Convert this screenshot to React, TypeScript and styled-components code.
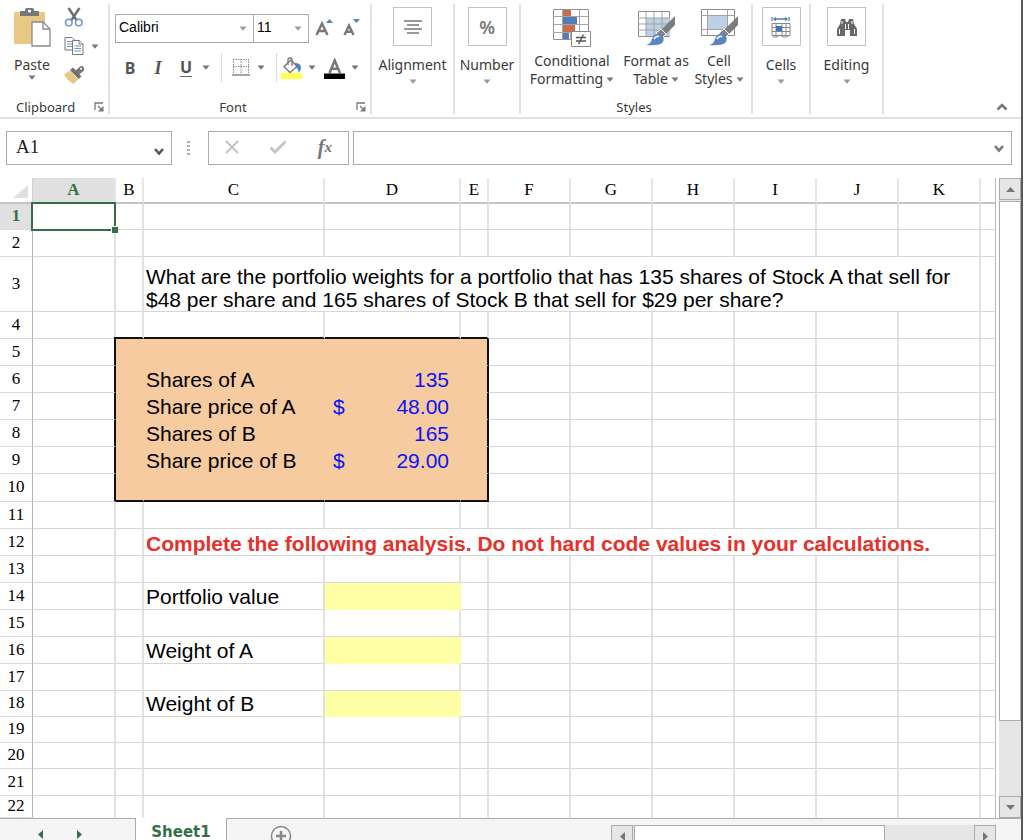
import React from "react";
import styled, { createGlobalStyle, css } from "styled-components";

const GlobalStyle = createGlobalStyle`
  *, *::before, *::after { box-sizing: border-box; }
  body { margin: 0; background: #fff; overflow: hidden; }
  button, select, input { font: inherit; color: inherit; margin: 0; }
`;

const ui = `"Noto Sans", "Open Sans", sans-serif`;
const sans = `"Liberation Sans", Arial, sans-serif`;
const serif = `"Liberation Serif", "Times New Roman", serif`;

const Shell = styled.div`
  display: flex;
  flex-direction: column;
  height: 100vh;
  overflow: hidden;
  margin-right: 1px;
  border-right: 2px solid #58595b;
  background: #fff;
`;

/* Ribbon */
const Ribbon = styled.header`
  display: flex;
  flex: none;
  height: 119px;
  padding-top: 4px;
  border-bottom: 2px solid #e1e1e1;
  font-family: ${ui};
  color: #3a3a3a;
`;

const Group = styled.section<{ $w: number }>`
  display: flex;
  flex-direction: column;
  flex: none;
  width: ${(p) => p.$w}px;
  height: 110px;
  border-right: 2px solid #e2e2e2;
`;

const GroupBody = styled.div`
  display: flex;
  flex: 1;
`;

const GroupFooter = styled.div<{ $left?: number }>`
  display: flex;
  align-items: center;
  height: 14px;
  padding: 0 4px 0 ${(p) => p.$left ?? 0}px;
  font-size: 13px;
  line-height: 14px;
`;

const GroupLabel = styled.span<{ $center?: boolean }>`
  flex: ${(p) => (p.$center ? 1 : "none")};
  text-align: center;
`;

const PlainButton = styled.button`
  display: inline-flex;
  align-items: center;
  padding: 0;
  border: 0;
  background: none;
  svg { display: block; flex: none; }
`;

const Launcher = styled(PlainButton)`
  margin-left: auto;
`;

const LargeButton = styled(PlainButton)<{ $w: number }>`
  flex-direction: column;
  justify-content: flex-start;
  flex: none;
  width: ${(p) => p.$w}px;
  padding-top: 3px;
  font-size: 14px;
  line-height: 18px;
  white-space: nowrap;
`;

const Tile = styled.span`
  display: grid;
  place-items: center;
  width: 39px;
  height: 39px;
  margin-bottom: 10px;
  border: 1px solid #c2c2c2;
`;

const Percent = styled.span`
  font-size: 18px;
  font-weight: 600;
  color: #777;
`;

const Picture = styled.span<{ $gap: number }>`
  display: block;
  height: 41px;
  margin-bottom: ${(p) => p.$gap}px;
`;

const CaretGap = styled.span<{ $gap?: number }>`
  display: block;
  margin-top: ${(p) => p.$gap ?? 5}px;
`;

const LabelLine = styled.span`
  display: flex;
  align-items: center;
  gap: 3px;
`;

const ToolColumn = styled.div`
  display: flex;
  flex-direction: column;
  gap: 9px;
  padding-top: 3px;
`;

const SmallTool = styled(PlainButton)`
  gap: 7px;
  height: 20px;
`;

const FontBody = styled.div`
  flex: 1;
  padding: 9px 0 0 5px;
`;

const FontRow = styled.div`
  display: flex;
  align-items: center;
  height: 30px;
`;

const FormatRow = styled(FontRow)`
  height: 29px;
  margin-top: 10px;
`;

const PickBox = styled.label<{ $w: number }>`
  display: grid;
  grid-template-columns: 1fr 14px;
  align-items: center;
  width: ${(p) => p.$w}px;
  height: 29px;
  margin-right: -1px;
  border: 1px solid #ababab;
  font-family: ${sans};
  font-size: 14px;
  color: #000;
  select {
    grid-area: 1 / 1 / 2 / 3;
    width: 100%;
    height: 27px;
    padding: 0 0 2px 3px;
    border: 0;
    background: none;
    appearance: none;
  }
  svg { grid-area: 1 / 2; pointer-events: none; }
`;

const FormatButton = styled(PlainButton)<{ $w: number }>`
  justify-content: space-between;
  width: ${(p) => p.$w}px;
  height: 24px;
`;

const SizeButton = styled(FormatButton)`
  justify-content: flex-end;
`;

const LastFormat = styled(FormatButton)`
  margin-left: 8px;
`;

const FormatSet = styled.div`
  display: flex;
  gap: 16px;
  padding-left: 9px;
`;

const Glyph = styled.span<{ $italic?: boolean; $under?: boolean }>`
  width: 12px;
  font-family: ${(p) => (p.$italic ? serif : ui)};
  font-size: ${(p) => (p.$italic ? 18 : 16)}px;
  font-weight: 700;
  line-height: 18px;
  color: #555;
  text-align: center;
  ${(p) => p.$italic && css`font-style: italic;`}
  ${(p) => p.$under && css`border-bottom: 1px solid #666;`}
`;

const Rule = styled.span<{ $before: number; $after: number }>`
  width: 1px;
  height: 29px;
  margin: 0 ${(p) => p.$after}px 0 ${(p) => p.$before}px;
  background: #dadada;
`;

const CollapseButton = styled(PlainButton)`
  align-self: flex-end;
  margin: 0 13px 6px auto;
`;

/* Formula bar */
const FormulaBar = styled.div`
  display: flex;
  flex: none;
  align-items: center;
  padding: 12px 9px 13px 6px;
  font-family: ${serif};
`;

const NameBox = styled.label`
  display: flex;
  align-items: center;
  width: 166px;
  height: 34px;
  padding: 0 6px 0 0;
  border: 1px solid #ababab;
  input {
    flex: 1;
    min-width: 0;
    padding: 0 0 2px 9px;
    border: 0;
    background: none;
    font-size: 19px;
    color: #222;
  }
  svg { margin-top: 6px; }
`;

const FormulaField = styled(NameBox)`
  flex: 1;
  width: auto;
  svg { margin-top: 0; }
`;

const Dots = styled.svg`
  margin: 0 17px 0 15px;
`;

const EntryButtons = styled.div`
  display: flex;
  align-items: center;
  justify-content: space-between;
  width: 141px;
  height: 34px;
  margin-right: 4px;
  padding: 0 16px 2px 16px;
  border: 1px solid #ababab;
`;

const FxButton = styled(PlainButton)`
  font-size: 20px;
  font-style: italic;
  font-weight: 700;
  line-height: 20px;
  color: #777;
  sub { font-size: 15px; line-height: 10px; vertical-align: baseline; }
`;

/* Sheet */
const SheetArea = styled.main`
  display: flex;
  flex: none;
`;

const GridFrame = styled.div`
  flex: 1;
  min-width: 0;
  padding-right: 3px;
`;

const Grid = styled.table`
  width: 100%;
  table-layout: fixed;
  border-collapse: separate;
  border-spacing: 0;
  border-right: 1px solid #b8b8b8;
  font-family: ${serif};
  font-size: 17px;
  line-height: 20px;
`;

const HeadCol = styled.col`
  width: 33px;
`;

const SizedCol = styled.col<{ $w: number }>`
  width: ${(p) => p.$w}px;
`;

const Corner = styled.td`
  padding: 0 4px 4px 0;
  height: 26px;
  border-bottom: 2px solid #c4c4c4;
  border-right: 1px solid #d0d0d0;
  vertical-align: bottom;
  svg { display: block; margin-left: auto; }
`;

const ColHead = styled.th<{ $active?: boolean }>`
  height: 26px;
  padding: 0;
  border-bottom: 2px solid #c4c4c4;
  border-right: 2px solid #e6e6e6;
  background: ${(p) => (p.$active ? "#e0e0e0" : "#fff")};
  color: ${(p) => (p.$active ? "#337048" : "#000")};
  font-weight: ${(p) => (p.$active ? 700 : 400)};
  &:last-child { border-right: 0; }
`;

const RowHead = styled.th<{ $active?: boolean }>`
  padding: 0 0 1px;
  border-bottom: 1px solid #dcdcdc;
  border-right: 1px solid #b4b4b4;
  background: ${(p) => (p.$active ? "#e0e0e0" : "#fff")};
  color: ${(p) => (p.$active ? "#337048" : "#000")};
  font-weight: ${(p) => (p.$active ? 700 : 400)};
`;

type Edge = "line" | "box" | "none";
const edge = (kind: Edge, blank: string, line: string) =>
  kind === "line" ? line : kind === "box" ? "2px solid #111" : `1px solid ${blank}`;

const Cell = styled.td<{ $fill: string; $right: Edge; $bottom: Edge }>`
  padding: 0 0 0 2px;
  background: ${(p) => p.$fill};
  border-right: ${(p) => edge(p.$right, p.$fill, "2px solid #e2e2e2")};
  border-bottom: ${(p) => edge(p.$bottom, p.$fill, "1px solid #d6d6d6")};
  font-family: ${sans};
  font-size: 21px;
  line-height: 23px;
  color: #000;
  white-space: nowrap;
`;

const ActiveCell = styled(Cell)`
  position: relative;
  &::before {
    content: "";
    position: absolute;
    inset: -2px;
    border: 2px solid #337048;
  }
  &::after {
    content: "";
    position: absolute;
    right: -4px;
    bottom: -4px;
    width: 7px;
    height: 7px;
    border: solid #fff;
    border-width: 1px 0 0 1px;
    background: #337048;
  }
`;

/* Joins the top and left edges of the input box. */
const BoxCornerCell = styled(Cell)`
  position: relative;
  &::before {
    content: "";
    position: absolute;
    top: -2px;
    left: -2px;
    width: 2px;
    height: 2px;
    background: #111;
  }
`;

const Question = styled.p`
  margin: 0;
  padding-top: 8px;
`;

const Notice = styled.strong`
  display: block;
  padding-top: 3px;
  color: #e8302a;
`;

const RowLabel = styled.span`
  display: block;
`;

const Amount = styled.span`
  display: flex;
  justify-content: space-between;
  padding: 0 11px 0 6px;
  color: #0a14f5;
`;

/* Scroll bars */
const VScroll = styled.div`
  display: flex;
  flex-direction: column;
  flex: none;
  width: 22px;
  background: #e6e6e6;
`;

const ScrollButton = styled(PlainButton)`
  flex: none;
  justify-content: center;
  width: 22px;
  height: 22px;
  border: 1px solid #ababab;
  background: #e6e6e6;
`;

const Thumb = styled.div<{ $grow: number; $wide?: boolean }>`
  flex: ${(p) => p.$grow};
  border: 1px solid #ababab;
  background: #fff;
  margin: ${(p) => (p.$wide ? "0 0 0 1px" : "1px 0 0")};
`;

const Track = styled.div<{ $grow: number }>`
  flex: ${(p) => p.$grow};
`;

const TabBar = styled.footer`
  display: flex;
  flex: none;
  height: 34px;
  background: #f5f5f5;
`;

const TabNav = styled.div`
  display: flex;
  align-items: center;
  width: 136px;
  padding: 0 0 2px 35px;
  gap: 28px;
  border-top: 1px solid #ababab;
  border-right: 1px solid #ababab;
`;

const Tab = styled.button`
  display: flex;
  justify-content: center;
  width: 90px;
  padding: 2px 0 0;
  border: 0;
  background: #fff;
  font-family: "DejaVu Sans", sans-serif;
  font-size: 15px;
  font-weight: 700;
  line-height: 24px;
  color: #337048;
`;

const TabRest = styled.div`
  display: flex;
  flex: 1;
  justify-content: space-between;
  padding: 6px 25px 0 43px;
  border-top: 1px solid #ababab;
  border-left: 1px solid #ababab;
`;

const AddSheet = styled(PlainButton)`
  height: 22px;
`;

const HScroll = styled.div`
  display: flex;
  width: 385px;
  height: 22px;
  background: #e6e6e6;
`;

const Caret = ({ pale }: { pale?: boolean }) => (
  <svg width="8" height="5" viewBox="0 0 8 5" aria-hidden="true">
    <path d="M0.5 0.5h7L4 4.7z" fill={pale ? "#9a9a9a" : "#777"} />
  </svg>
);

const Chevron = ({ up, dark }: { up?: boolean; dark?: boolean }) => (
  <svg width="12" height="9" viewBox="0 0 12 9" aria-hidden="true">
    <path d={up ? "M1.5 7.5L6 3l4.5 4.5" : "M2 2l4 4.5L10 2"} fill="none" stroke={dark ? "#555" : "#777"} strokeWidth="2.6" />
  </svg>
);

const LaunchIcon = () => (
  <svg width="10" height="10" viewBox="0 0 10 10" fill="none" stroke="#777" aria-hidden="true">
    <path d="M1 8V1h8M4 4l4 4" strokeWidth="1.3" />
    <path d="M9.500 4v5.500H4z" fill="#777" stroke="none" />
  </svg>
);

const PasteIcon = () => (
  <svg width="38" height="41" viewBox="0 0 38 41" aria-hidden="true">
    <rect x="1" y="5" width="31" height="32" rx="1" fill="#e8c882" />
    <path d="M7 9V4h5V2.500Q12 1 14 1h5q2 0 2 1.500V4h5v5z" fill="#777" />
    <circle cx="16.500" cy="4" r="1.600" fill="#fff" />
    <path d="M19 15h11l7 7v17H19z" fill="#fff" stroke="#8a8a8a" strokeWidth="1.3" />
    <path d="M30 15v7h7" fill="none" stroke="#8a8a8a" strokeWidth="1.3" />
  </svg>
);

const CutIcon = () => (
  <svg width="20" height="20" viewBox="0 0 20 20" fill="none" aria-hidden="true">
    <path d="M4.500 1l8 12M15.500 1L7.500 13" stroke="#6c6c6c" strokeWidth="2.4" />
    <circle cx="4.800" cy="15.500" r="3.300" stroke="#6b93c7" strokeWidth="1.5" />
    <circle cx="14.800" cy="15.500" r="3.300" stroke="#6b93c7" strokeWidth="1.5" />
  </svg>
);

const CopyIcon = () => (
  <svg width="20" height="20" viewBox="0 0 20 20" fill="#fff" aria-hidden="true">
    <path d="M1 1.500h7l3 3V14H1z" stroke="#777" />
    <path d="M3 5.500h5M3 8h5M3 10.500h5" stroke="#6b93c7" />
    <path d="M8.500 4.500h7l3.500 3.500v10.500H8.500z" stroke="#777" />
    <path d="M15 4.500V8h4" stroke="#777" />
    <path d="M10.500 10h6.500M10.500 12.500h6.500M10.500 15h6.500" stroke="#6b93c7" />
  </svg>
);

const PainterIcon = () => (
  <svg width="20" height="20" viewBox="0 0 20 20" aria-hidden="true">
    <path d="M0 9.500l6-4 8 9-4.500 4.500Q3 15.500 0 9.500z" fill="#e8c882" />
    <path d="M6 5l3-2.500 8.500 9L14.500 14z" fill="#6f6f6f" />
    <path d="M11 6l4.500-4q2.500-2 4 0t0 4L14.500 10z" fill="#777" />
    <circle cx="17" cy="3.800" r="1" fill="#fff" />
  </svg>
);

const GrowFont = ({ down }: { down?: boolean }) => (
  <svg width="18" height="22" viewBox="0 0 18 22" aria-hidden="true">
    <path
      d={down ? "M1.500 18L6 8.500 10.500 18M3.200 14.800h5.600" : "M1.500 18L7 6.500 12.500 18M3.800 14h6.400"}
      fill="none" stroke="#777" strokeWidth="2.4"
    />
    <path d={down ? "M10 2h7l-3.500 4z" : "M11 6h7l-3.500-4z"} fill="#4f80bd" />
  </svg>
);

const BorderIcon = () => (
  <svg width="18" height="19" viewBox="0 0 18 19" fill="none" stroke="#888" aria-hidden="true">
    <path d="M1.500 1v14M9 1v14M16.500 1v14M1 1.500h16M1 8.500h16" strokeDasharray="1.5 1" />
    <path d="M0 17h18" strokeWidth="1.5" />
  </svg>
);

const FillIcon = () => (
  <svg width="21" height="22" viewBox="0 0 21 22" fill="none" aria-hidden="true">
    <path d="M3 9.500L10 3l6 6.500-7 6z" fill="#fff" stroke="#777" strokeWidth="1.3" />
    <path d="M7 8V2.500Q7 1 9 1t2 1.500V9" stroke="#777" strokeWidth="1.3" />
    <path d="M14 6q6 0 6 5 0 2-2.500 5 0-4-2.500-6z" fill="#4f80bd" />
    <path d="M0 16h21v6H0z" fill="#ffff4d" />
  </svg>
);

const FontColorIcon = () => (
  <svg width="21" height="22" viewBox="0 0 21 22" aria-hidden="true">
    <path d="M5.500 16L10.700 3.500 16 16M7.500 11.800h6.500" fill="none" stroke="#777" strokeWidth="2.5" />
    <path d="M0 16.500h21v5.500H0z" fill="#000" />
  </svg>
);

const AlignIcon = () => (
  <svg width="20" height="16" viewBox="0 0 20 16" stroke="#777" strokeWidth="1.4" aria-hidden="true">
    <path d="M1 2h18M4 6h12M1 10h18M4 14h12" />
  </svg>
);

const ConditionalIcon = () => (
  <svg width="40" height="41" viewBox="0 0 40 41" fill="none" aria-hidden="true">
    <path d="M1.500 2.500h35v30h-35z" fill="#fff" stroke="#909090" />
    <path d="M10.500 2v31M18.500 2v31M27.500 2v31M1 9.500h35M1 17.500h35M1 25.500h35" stroke="#a5a5a5" />
    <path d="M11 3h8v6h-8zM11 18h12v7H11z" fill="#cc6a4c" />
    <path d="M11 10h14v7H11zM11 26h6v6h-6z" fill="#4f7fba" />
    <path d="M19.500 24.500h19v15h-19z" fill="#fff" stroke="#8a8a8a" />
    <path d="M24 30.500h10M24 34h10M31.500 27.500l-5 9.500" stroke="#555" strokeWidth="1.4" />
  </svg>
);

const Brush = () => (
  <>
    <path d="M38 9v9L28 28l-5-4z" fill="#7d7d7d" />
    <path d="M24 22l5 5-4 4-6-5z" fill="#858585" stroke="#fff" />
    <path d="M9 38q5-1 6-6 3-7 9-5 5 4 1 9-4 3-16 2z" fill="#5a86c0" />
    <path d="M17 32q3-4 5-2" stroke="#fff" strokeWidth="1.5" fill="none" />
  </>
);

const TableIcon = () => (
  <svg width="38" height="41" viewBox="0 0 38 41" fill="none" aria-hidden="true">
    <path d="M1.500 4.500h31v25h-31z" fill="#fff" stroke="#8c8c8c" />
    <path d="M9 11h24v18H9z" fill="#bcd0e6" />
    <path d="M9 4v26M17 4v26M25 4v26M1 11h32M1 17h32M1 23h32" stroke="#a2a2a2" />
    <Brush />
  </svg>
);

const CellStylesIcon = () => (
  <svg width="38" height="41" viewBox="0 0 38 41" fill="none" aria-hidden="true">
    <path d="M1.500 2.500h33v26h-33z" fill="#fff" stroke="#8c8c8c" />
    <path d="M7.500 2v27M27.500 2v27M1 8.500h34M1 22.500h34" stroke="#a2a2a2" />
    <path d="M8 9h19v13H8z" fill="#bcd0e6" />
    <Brush />
  </svg>
);

const CellsIcon = () => (
  <svg width="22" height="24" viewBox="0 0 22 24" fill="none" aria-hidden="true">
    <path d="M2 2v4M19 2v4M4 4h13M6 2.500L4 4l2 1.500M15 2.500L17 4l-2 1.500" stroke="#4f80bd" strokeWidth="1.3" />
    <path d="M2 8.500h18v12H2zM6 8v12M12 8v12M16 8v12M2 12.500h18M2 16.500h18" stroke="#888" />
    <path d="M6 11h6v5H6z" fill="#3f78bd" />
    <path d="M2 20q1 3 5 2l3-2 3 2q5 1 6-2" stroke="#888" />
  </svg>
);

const FindIcon = () => (
  <svg width="22" height="22" viewBox="0 0 22 22" aria-hidden="true">
    <path d="M5 3h4l1 3h2l1-3h4l1 5 3 5v7h-7v-6H9v6H1v-7l3-5z" fill="#686868" />
    <path d="M9.500 8v5M12.500 8v5M3.500 13v5M18.500 13v5M6 5v3M16 5v3" stroke="#fff" strokeWidth="1" />
  </svg>
);

const Arrow = ({ dir, color = "#777" }: { dir: "up" | "down" | "left" | "right"; color?: string }) => {
  const shapes = { up: "M1 8l4.5-5L10 8z", down: "M1 3l4.500 5L10 3z", left: "M8 1L3 5.500 8 10z", right: "M3 1l5 4.500L3 10z" };
  return (
    <svg width="11" height="11" viewBox="0 0 11 11" aria-hidden="true">
      <path d={shapes[dir]} fill={color} />
    </svg>
  );
};

const columns = ["A", "B", "C", "D", "E", "F", "G", "H", "I", "J", "K", ""];
const columnWidths = [83, 28, 181, 136, 28, 82, 82, 82, 82, 82, 82];
const rowHeights = [26, 27, 55, 27, 27, 27, 27, 27, 27, 28, 27, 27, 27, 27, 27, 27, 27, 26, 26, 26, 27, 22];

const labels: Record<number, string> = {
  6: "Shares of A",
  7: "Share price of A",
  8: "Shares of B",
  9: "Share price of B",
  14: "Portfolio value",
  16: "Weight of A",
  18: "Weight of B",
};

const amounts: Record<number, [string, string]> = {
  6: ["", "135"],
  7: ["$", "48.00"],
  8: ["", "165"],
  9: ["$", "29.00"],
};

const Row = styled.tr<{ $h: number }>`
  height: ${(p) => p.$h}px;
`;

function cellLook(row: number, col: number) {
  const inRows = row >= 5 && row <= 10;
  const inBox = inRows && col >= 1 && col <= 4;
  const answer = col === 3 && [14, 16, 18].includes(row);
  const fill = inBox ? "#f6cb9f" : answer ? "#ffffa6" : "#fff";
  let right: Edge = col === columns.length - 1 ? "none" : "line";
  let bottom: Edge = row === 22 ? "none" : "line";
  if (inBox || answer) {
    right = "none";
    bottom = "none";
  }
  if (inRows && (col === 0 || col === 4)) right = "box";
  if ((row === 4 || row === 10) && col >= 1 && col <= 4) bottom = "box";
  return { $fill: fill, $right: right, $bottom: bottom };
}

function SheetRow({ row }: { row: number }) {
  const cells: React.ReactNode[] = [];
  for (let col = 0; col < columns.length; col++) {
    const look = cellLook(row, col);
    if (row === 1 && col === 0) {
      cells.push(<ActiveCell key={col} {...look} />);
    } else if (row === 5 && col === 1) {
      cells.push(<BoxCornerCell key={col} {...look} />);
    } else if (row === 3 && col === 2) {
      cells.push(
        <Cell key={col} {...look} colSpan={9}>
          <Question>
            What are the portfolio weights for a portfolio that has 135 shares of Stock A that sell for
            <br />
            $48 per share and 165 shares of Stock B that sell for $29 per share?
          </Question>
        </Cell>
      );
      col += 8;
    } else if (row === 12 && col === 2) {
      cells.push(
        <Cell key={col} {...look} colSpan={9}>
          <Notice>Complete the following analysis. Do not hard code values in your calculations.</Notice>
        </Cell>
      );
      col += 8;
    } else {
      cells.push(
        <Cell key={col} {...look}>
          {col === 2 && labels[row] && <RowLabel>{labels[row]}</RowLabel>}
          {col === 3 && amounts[row] && (
            <Amount>
              <span>{amounts[row][0]}</span>
              <span>{amounts[row][1]}</span>
            </Amount>
          )}
        </Cell>
      );
    }
  }
  return (
    <Row $h={rowHeights[row - 1]}>
      <RowHead scope="row" $active={row === 1}>{row}</RowHead>
      {cells}
    </Row>
  );
}

export default function App() {
  return (
    <Shell>
      <GlobalStyle />
      <Ribbon>
        <Group $w={110}>
          <GroupBody>
            <LargeButton $w={64}>
              <Picture $gap={8}><PasteIcon /></Picture>
              Paste
              <CaretGap $gap={1}><Caret /></CaretGap>
            </LargeButton>
            <ToolColumn>
              <SmallTool aria-label="Cut"><CutIcon /></SmallTool>
              <SmallTool aria-label="Copy"><CopyIcon /><Caret /></SmallTool>
              <SmallTool aria-label="Format painter"><PainterIcon /></SmallTool>
            </ToolColumn>
          </GroupBody>
          <GroupFooter $left={16}>
            <GroupLabel>Clipboard</GroupLabel>
            <Launcher aria-label="Clipboard options"><LaunchIcon /></Launcher>
          </GroupFooter>
        </Group>

        <Group $w={262}>
          <FontBody>
            <FontRow>
              <PickBox $w={139}>
                <select aria-label="Font"><option>Calibri</option></select>
                <Caret pale />
              </PickBox>
              <PickBox $w={56}>
                <select aria-label="Font size"><option>11</option></select>
                <Caret pale />
              </PickBox>
              <SizeButton $w={25} aria-label="Increase font size"><GrowFont /></SizeButton>
              <SizeButton $w={28} aria-label="Decrease font size"><GrowFont down /></SizeButton>
            </FontRow>
            <FormatRow>
              <FormatSet>
                <FormatButton $w={12} aria-label="Bold"><Glyph>B</Glyph></FormatButton>
                <FormatButton $w={12} aria-label="Italic"><Glyph $italic>I</Glyph></FormatButton>
                <FormatButton $w={30} aria-label="Underline"><Glyph $under>U</Glyph><Caret /></FormatButton>
              </FormatSet>
              <Rule $before={11} $after={10} />
              <FormatButton $w={33} aria-label="Borders"><BorderIcon /><Caret /></FormatButton>
              <Rule $before={11} $after={4} />
              <FormatButton $w={35} aria-label="Fill color"><FillIcon /><Caret /></FormatButton>
              <LastFormat $w={35} aria-label="Font color"><FontColorIcon /><Caret /></LastFormat>
            </FormatRow>
          </FontBody>
          <GroupFooter>
            <GroupLabel $center>Font</GroupLabel>
            <Launcher aria-label="Font options"><LaunchIcon /></Launcher>
          </GroupFooter>
        </Group>

        <Group $w={83}>
          <LargeButton $w={81}>
            <Tile><AlignIcon /></Tile>Alignment<CaretGap><Caret pale /></CaretGap>
          </LargeButton>
        </Group>
        <Group $w={66}>
          <LargeButton $w={64}>
            <Tile><Percent>%</Percent></Tile>Number<CaretGap><Caret pale /></CaretGap>
          </LargeButton>
        </Group>
        <Group $w={232}>
          <GroupBody>
            <LargeButton $w={102}>
              <Picture $gap={4}><ConditionalIcon /></Picture>
              <LabelLine>Conditional</LabelLine>
              <LabelLine>Formatting<Caret /></LabelLine>
            </LargeButton>
            <LargeButton $w={66}>
              <Picture $gap={4}><TableIcon /></Picture>
              <LabelLine>Format as</LabelLine>
              <LabelLine>Table<Caret /></LabelLine>
            </LargeButton>
            <LargeButton $w={60}>
              <Picture $gap={4}><CellStylesIcon /></Picture>
              <LabelLine>Cell</LabelLine>
              <LabelLine>Styles<Caret /></LabelLine>
            </LargeButton>
          </GroupBody>
          <GroupFooter><GroupLabel $center>Styles</GroupLabel></GroupFooter>
        </Group>
        <Group $w={58}>
          <LargeButton $w={56}>
            <Tile><CellsIcon /></Tile>Cells<CaretGap><Caret pale /></CaretGap>
          </LargeButton>
        </Group>
        <Group $w={73}>
          <LargeButton $w={71}>
            <Tile><FindIcon /></Tile>Editing<CaretGap><Caret pale /></CaretGap>
          </LargeButton>
        </Group>
        <CollapseButton aria-label="Collapse ribbon"><Chevron up /></CollapseButton>
      </Ribbon>

      <FormulaBar>
        <NameBox>
          <input aria-label="Name box" defaultValue="A1" />
          <Chevron dark />
        </NameBox>
        <Dots width="4" height="16" viewBox="0 0 4 16" fill="#b0b0b0" aria-hidden="true">
          <path d="M0 1h3v2H0zM0 5h3v2H0zM0 9h3v2H0zM0 13h3v2H0z" />
        </Dots>
        <EntryButtons>
          <PlainButton aria-label="Cancel">
            <svg width="14" height="14" viewBox="0 0 14 14" stroke="#c4c4c4" strokeWidth="2"><path d="M1 1l12 12M13 1L1 13" /></svg>
          </PlainButton>
          <PlainButton aria-label="Enter">
            <svg width="18" height="14" viewBox="0 0 18 14" fill="none" stroke="#c4c4c4" strokeWidth="2.8"><path d="M1.500 7.500L6 12 16.500 1.500" /></svg>
          </PlainButton>
          <FxButton aria-label="Insert function">f<sub>x</sub></FxButton>
        </EntryButtons>
        <FormulaField>
          <input aria-label="Formula" defaultValue="" />
          <Chevron />
        </FormulaField>
      </FormulaBar>

      <SheetArea>
        <GridFrame>
          <Grid>
            <colgroup>
              <HeadCol />
              {columnWidths.map((w, i) => <SizedCol key={i} $w={w} />)}
              <col />
            </colgroup>
            <thead>
              <tr>
                <Corner>
                  <svg width="15" height="13" viewBox="0 0 15 13" aria-hidden="true"><path d="M15 0v13H0z" fill="#e0e0e0" /></svg>
                </Corner>
                {columns.map((name, i) => (
                  <ColHead key={i} scope="col" $active={name === "A"}>{name}</ColHead>
                ))}
              </tr>
            </thead>
            <tbody>
              {rowHeights.map((_, i) => <SheetRow key={i} row={i + 1} />)}
            </tbody>
          </Grid>
        </GridFrame>
        <VScroll>
          <ScrollButton aria-label="Scroll up"><Arrow dir="up" /></ScrollButton>
          <Thumb $grow={520} />
          <Track $grow={75} />
          <ScrollButton aria-label="Scroll down"><Arrow dir="down" /></ScrollButton>
        </VScroll>
      </SheetArea>

      <TabBar>
        <TabNav>
          <PlainButton aria-label="Previous sheet"><Arrow dir="left" color="#337048" /></PlainButton>
          <PlainButton aria-label="Next sheet"><Arrow dir="right" color="#337048" /></PlainButton>
        </TabNav>
        <Tab>Sheet1</Tab>
        <TabRest>
          <AddSheet aria-label="Add sheet">
            <svg width="22" height="22" viewBox="0 0 22 22" fill="none" stroke="#888">
              <circle cx="11" cy="11" r="9.500" strokeWidth="1.5" />
              <path d="M11 6v10M6 11h10" strokeWidth="2.5" />
            </svg>
          </AddSheet>
          <HScroll>
            <ScrollButton aria-label="Scroll left"><Arrow dir="left" /></ScrollButton>
            <Thumb $grow={250} $wide />
            <Track $grow={90} />
            <ScrollButton aria-label="Scroll right"><Arrow dir="right" /></ScrollButton>
          </HScroll>
        </TabRest>
      </TabBar>
    </Shell>
  );
}
